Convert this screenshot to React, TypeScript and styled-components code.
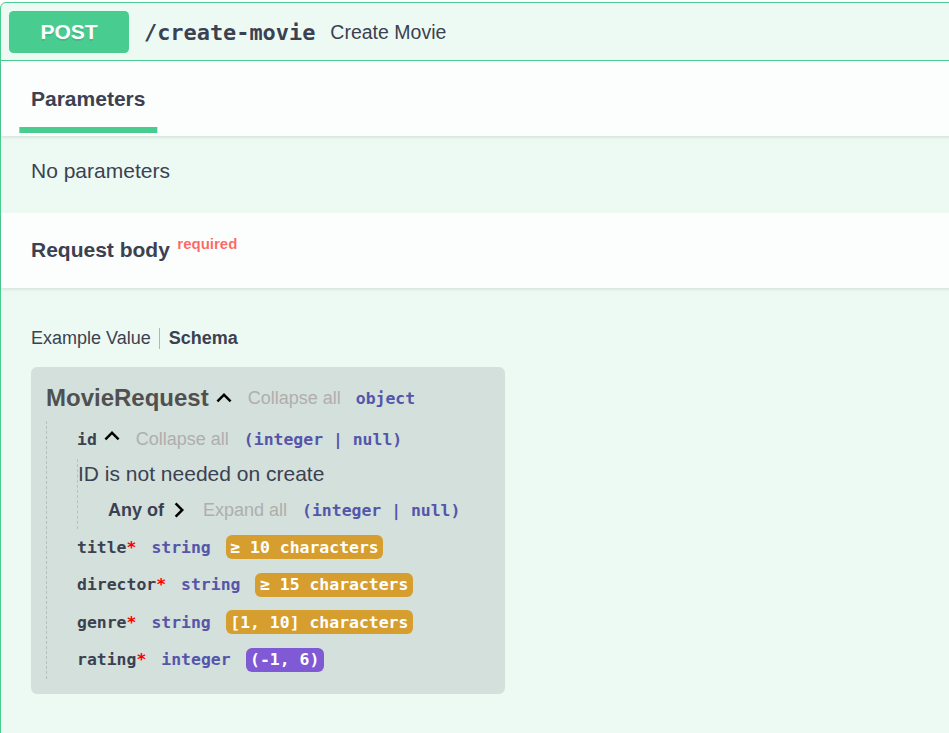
import React from "react";
import styled, { createGlobalStyle } from "styled-components";

const MONO = `"DejaVu Sans Mono", "Liberation Mono", monospace`;
const SANS = `"Liberation Sans", Arial, sans-serif`;

const GlobalStyle = createGlobalStyle`
  html, body { margin: 0; padding: 0; overflow: hidden; background: #ffffff; }
  body { font-family: ${SANS}; color: #3b4151; }
  * { box-sizing: border-box; }
`;

const Viewport = styled.div`
  width: 949px;
  height: 733px;
  overflow: hidden;
  padding-top: 2px;
`;

const Opblock = styled.div`
  width: 990px;
  border: 1px solid #49cc90;
  border-radius: 6px;
  background: #edfaf4;
`;

const Summary = styled.div`
  display: flex;
  align-items: center;
  padding: 8px 8px 7px 8px;
  border-bottom: 1px solid #49cc90;
`;

const MethodBadge = styled.span`
  display: flex;
  align-items: center;
  justify-content: center;
  min-width: 120px;
  height: 42px;
  border-radius: 4.5px;
  background: #49cc90;
  color: #ffffff;
  font-family: ${SANS};
  font-weight: 700;
  font-size: 21px;
  text-shadow: 0 1.5px 0 rgba(0, 0, 0, 0.1);
`;

const PathText = styled.span`
  font-family: ${MONO};
  font-weight: 700;
  font-size: 21.9px;
  color: #3b4151;
  padding: 0 15px;
`;

const SummaryDesc = styled.span`
  font-family: ${SANS};
  font-size: 19.5px;
  color: #3b4151;
`;

const SectionHeader = styled.div`
  position: relative;
  z-index: 1;
  display: flex;
  align-items: center;
  height: 75px;
  padding: 0 30px;
  background: rgba(255, 255, 255, 0.8);
  box-shadow: 0 1.5px 3px rgba(0, 0, 0, 0.1);
`;

const TabItem = styled.div`
  position: relative;
  align-self: stretch;
  display: flex;
  align-items: center;
`;

const TabUnderline = styled.span`
  position: absolute;
  bottom: 3px;
  left: 50%;
  width: 120%;
  height: 6px;
  transform: translateX(-50%);
  background: #49cc90;
`;

const SectionTitle = styled.h4`
  margin: 0;
  font-family: ${SANS};
  font-size: 21px;
  font-weight: 700;
  color: #3b4151;
`;

const RequiredMark = styled.span`
  position: relative;
  top: -9px;
  padding: 7.5px;
  font-size: 15px;
  font-weight: 700;
  color: rgba(255, 0, 0, 0.6);
`;

const DescriptionWrapper = styled.div`
  padding: 22.5px 30px;
  margin-bottom: 7.5px;
`;

const PlainText = styled.p`
  margin: 0;
  font-size: 21px;
  line-height: 24px;
  color: #3b4151;
`;

const BodyWrapper = styled.div`
  padding: 40.5px 30px 60px;
`;

const ExampleTabs = styled.ul`
  display: flex;
  list-style: none;
  margin: 0;
  padding: 0;
`;

const ExampleTab = styled.li<{ $active?: boolean; $first?: boolean }>`
  font-size: 18px;
  line-height: 21px;
  color: #3b4151;
  font-weight: ${(p) => (p.$active ? 700 : 400)};
  padding: ${(p) => (p.$first ? "0 8px 0 0" : "0 0 0 9px")};
  border-right: ${(p) => (p.$first ? "1.5px solid #b5b5b5" : "none")};
`;

const ModelBox = styled.div`
  width: 474px;
  margin-top: 18px;
  padding: 15px;
  border-radius: 6px;
  background: rgba(0, 0, 0, 0.1);
`;

const SchemaHead = styled.div`
  display: flex;
  align-items: center;
  height: 32px;
`;

const ModelTitle = styled.span`
  font-family: ${SANS};
  font-size: 24px;
  font-weight: 700;
  color: #505050;
`;

const Chevron = styled.svg<{ $expanded?: boolean; $lift?: number }>`
  width: 30px;
  height: 30px;
  flex-shrink: 0;
  fill: #000000;
  transform: ${(p) => (p.$expanded ? "rotate(-90deg)" : "none")};
  margin-bottom: ${(p) => p.$lift ?? 0}px;
`;

const DeepButton = styled.span`
  margin-left: 9px;
  font-family: ${SANS};
  font-size: 18px;
  color: #afaeae;
`;

const TypeAttr = styled.span`
  padding-left: 15px;
  font-family: ${MONO};
  font-weight: 700;
  font-size: 16.45px;
  color: #5555aa;
`;

const SchemaBody = styled.div<{ $pad: number; $mt: number }>`
  margin-top: ${(p) => p.$mt}px;
  padding-left: ${(p) => p.$pad}px;
  border-left: 1px dashed rgba(0, 0, 0, 0.14);
`;

const PropertyRow = styled.div`
  display: flex;
  align-items: center;
  height: 37.5px;
`;

const PropName = styled.span`
  font-family: ${MONO};
  font-weight: 700;
  font-size: 16.45px;
  color: #3b4151;
`;

const RequiredStar = styled.span`
  color: #ff0000;
`;

const PropDescription = styled.div`
  height: 33px;
  padding-top: 3.5px;
  font-family: ${SANS};
  font-size: 21px;
  line-height: 24px;
  color: #3b4151;
`;

const SubRow = styled.div`
  display: flex;
  align-items: center;
  height: 37px;
  padding-left: 30px;
`;

const SubTitle = styled.span`
  font-family: ${SANS};
  font-size: 18px;
  font-weight: 700;
  color: #3b4151;
`;

const Constraint = styled.span<{ $kind: "string" | "number" }>`
  margin-left: 15px;
  padding: 1.5px 4.5px;
  border-radius: 6px;
  line-height: 21px;
  font-family: ${MONO};
  font-weight: 700;
  font-size: 16.45px;
  color: #ffffff;
  background: ${(p) => (p.$kind === "string" ? "#d69e2e" : "#805ad5")};
`;

const ChevronIcon: React.FC<{ expanded?: boolean; lift?: number }> = ({ expanded, lift }) => (
  <Chevron viewBox="0 0 24 24" $expanded={expanded} $lift={lift}>
    <path d="M10 6L8.59 7.41 13.17 12l-4.58 4.59L10 18l6-6z" />
  </Chevron>
);

type Prop = {
  name: string;
  type: string;
  constraint: string;
  kind: "string" | "number";
};

const props: Prop[] = [
  { name: "title", type: "string", constraint: "≥ 10 characters", kind: "string" },
  { name: "director", type: "string", constraint: "≥ 15 characters", kind: "string" },
  { name: "genre", type: "string", constraint: "[1, 10] characters", kind: "string" },
  { name: "rating", type: "integer", constraint: "(-1, 6)", kind: "number" },
];

export default function App() {
  return (
    <>
      <GlobalStyle />
      <Viewport>
        <Opblock>
          <Summary>
            <MethodBadge>POST</MethodBadge>
            <PathText>/create-movie</PathText>
            <SummaryDesc>Create Movie</SummaryDesc>
          </Summary>

          <SectionHeader>
            <TabItem>
              <SectionTitle>Parameters</SectionTitle>
              <TabUnderline />
            </TabItem>
          </SectionHeader>

          <DescriptionWrapper>
            <PlainText>No parameters</PlainText>
          </DescriptionWrapper>

          <SectionHeader>
            <SectionTitle>
              Request body<RequiredMark>required</RequiredMark>
            </SectionTitle>
          </SectionHeader>

          <BodyWrapper>
            <ExampleTabs>
              <ExampleTab $first>Example Value</ExampleTab>
              <ExampleTab $active>Schema</ExampleTab>
            </ExampleTabs>

            <ModelBox>
              <SchemaHead>
                <ModelTitle>MovieRequest</ModelTitle>
                <ChevronIcon expanded />
                <DeepButton>Collapse all</DeepButton>
                <TypeAttr>object</TypeAttr>
              </SchemaHead>

              <SchemaBody $pad={30} $mt={7}>
                <PropertyRow>
                  <PropName>id</PropName>
                  <ChevronIcon expanded lift={7} />
                  <DeepButton>Collapse all</DeepButton>
                  <TypeAttr>(integer | null)</TypeAttr>
                </PropertyRow>
                <SchemaBody $pad={0} $mt={0}>
                  <PropDescription>ID is not needed on create</PropDescription>
                  <SubRow>
                    <SubTitle>Any of</SubTitle>
                    <ChevronIcon />
                    <DeepButton>Expand all</DeepButton>
                    <TypeAttr>(integer | null)</TypeAttr>
                  </SubRow>
                </SchemaBody>
                {props.map((p) => (
                  <PropertyRow key={p.name}>
                    <PropName>
                      {p.name}
                      <RequiredStar>*</RequiredStar>
                    </PropName>
                    <TypeAttr>{p.type}</TypeAttr>
                    <Constraint $kind={p.kind}>{p.constraint}</Constraint>
                  </PropertyRow>
                ))}
              </SchemaBody>
            </ModelBox>
          </BodyWrapper>
        </Opblock>
      </Viewport>
    </>
  );
}
